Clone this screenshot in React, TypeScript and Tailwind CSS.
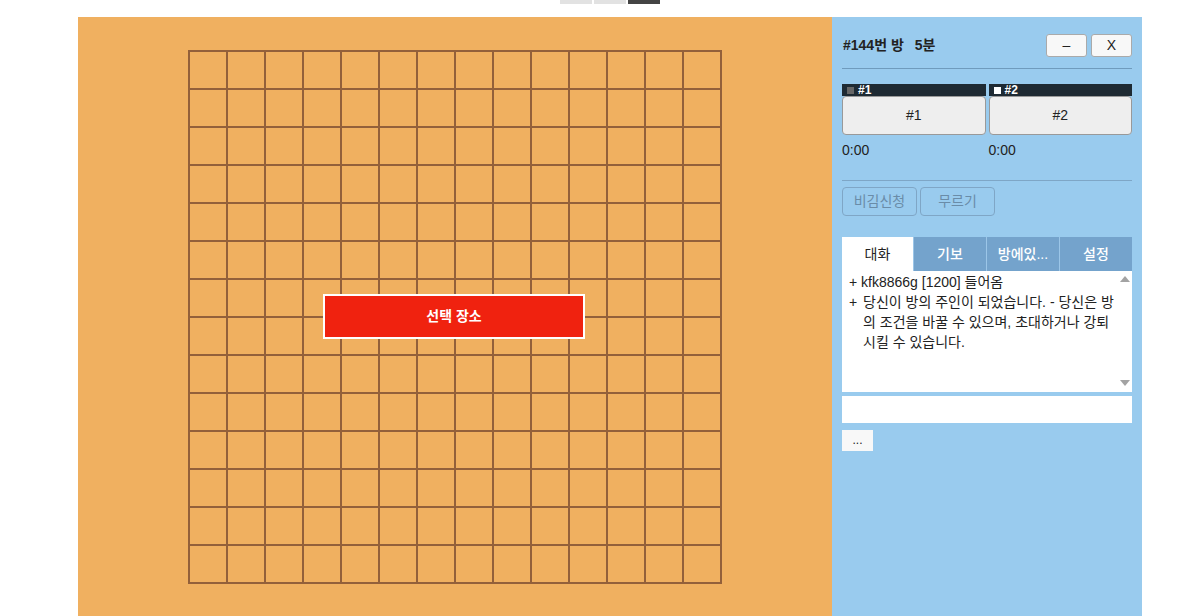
import React from 'react'

const font = { fontFamily: '"Liberation Sans", "Noto Sans CJK KR", sans-serif' }

function Board() {
  const step = 38
  const lines = Array.from({ length: 15 }, (_, i) => i * step + 1)
  return (
    <div className="relative w-[754px] h-[599px] bg-[#f0b060] flex justify-center pt-[33px]">
      <svg width="534" height="534" viewBox="0 0 534 534" className="block">
        {lines.map((p) => (
          <g key={p}>
            <line x1={p} y1={0} x2={p} y2={534} stroke="#93603a" strokeWidth={2} />
            <line x1={0} y1={p} x2={534} y2={p} stroke="#93603a" strokeWidth={2} />
          </g>
        ))}
      </svg>
      <div className="absolute left-[245px] top-[277px] w-[262px] h-[45px] border-2 border-white bg-[#f0220f] flex items-center justify-center">
        <span className="text-white text-[14px] font-bold">선택 장소</span>
      </div>
    </div>
  )
}

function PlayerBox({ name, white }: { name: string; white?: boolean }) {
  return (
    <div className="flex flex-col flex-1">
      <div className="h-[12px] bg-[#1e2a33] flex items-center pl-[5px] gap-[4px]">
        <span className={`w-[7px] h-[7px] ${white ? 'bg-white' : 'bg-[#666]'}`} />
        <span className="text-white text-[12px] font-bold leading-none">{name}</span>
      </div>
      <button className="h-[39px] bg-[#eeeeee] border border-[#999] rounded-[4px] text-[14px] text-[#222]">
        {name}
      </button>
      <div className="mt-[5px] text-[14px] text-[#222]">0:00</div>
    </div>
  )
}

function Panel() {
  const tabs = ['대화', '기보', '방에있...', '설정']
  return (
    <div className="w-[310px] h-[599px] bg-[#99cbee] px-[10px]">
      <div className="flex items-center justify-between pt-[17px] pb-[11px]">
        <div className="text-[14px] font-bold text-[#222] pl-[1px]">
          #144번 방<span className="ml-[11px]">5분</span>
        </div>
        <div className="flex gap-[4px]">
          <button className="w-[41px] h-[23px] bg-[#f8f8f8] border border-[#aaa] rounded-[3px] text-[14px] text-[#222]">–</button>
          <button className="w-[41px] h-[23px] bg-[#f8f8f8] border border-[#aaa] rounded-[3px] text-[14px] text-[#222]">X</button>
        </div>
      </div>
      <div className="h-px bg-[#6f9bbd]" />
      <div className="flex gap-[3px] mt-[15px]">
        <PlayerBox name="#1" />
        <PlayerBox name="#2" white />
      </div>
      <div className="h-px bg-[#7ea6c6] mt-[19px]" />
      <div className="flex gap-[3px] mt-[6px]">
        <button className="w-[75px] h-[29px] border border-[#7fa6c6] rounded-[4px] text-[14px] text-[#6a8ca8]">비김신청</button>
        <button className="w-[75px] h-[29px] border border-[#7fa6c6] rounded-[4px] text-[14px] text-[#6a8ca8]">무르기</button>
      </div>
      <div className="flex mt-[21px] h-[34px]">
        {tabs.map((t, i) => (
          <div
            key={t}
            className={`flex items-center justify-center text-[14px] ${
              i === 0 ? 'w-[71px] bg-white text-[#222]' : 'flex-1 bg-[#74a3cc] text-white font-medium border-l border-[#9cc6e8]'
            }`}
          >
            {t}
          </div>
        ))}
      </div>
      <div className="relative h-[121px] bg-white pl-[7px] pt-[1px] text-[14px] leading-[20px] text-[#222]">
        <div>+ kfk8866g [1200] 들어옴</div>
        <div className="flex">
          <span className="w-[14px] shrink-0">+</span>
          <span>
            당신이 방의 주인이 되었습니다. - 당신은 방<br />의 조건을 바꿀 수 있으며, 초대하거나 강퇴<br />시킬 수 있습니다.
          </span>
        </div>
        <span className="absolute right-[2px] top-[5px] w-0 h-0 border-l-[5px] border-r-[5px] border-b-[6px] border-l-transparent border-r-transparent border-b-[#a3a3a3]" />
        <span className="absolute right-[2px] bottom-[6px] w-0 h-0 border-l-[5px] border-r-[5px] border-t-[6px] border-l-transparent border-r-transparent border-t-[#a3a3a3]" />
      </div>
      <div className="h-[27px] bg-white mt-[4px]" />
      <button className="mt-[7px] w-[31px] h-[21px] bg-[#f8f8f8] text-[12px] text-[#222] leading-none flex items-end justify-center pb-[5px]">...</button>
    </div>
  )
}

export default function App() {
  return (
    <div className="w-[1177px] h-[616px] bg-white overflow-hidden" style={font}>
      <div className="h-[17px] flex justify-center gap-[2px] pl-[43px]">
        <div className="w-[32px] h-[4px] bg-[#e2e2e2]" />
        <div className="w-[32px] h-[4px] bg-[#e2e2e2]" />
        <div className="w-[32px] h-[4px] bg-[#444]" />
      </div>
      <div className="flex ml-[78px]">
        <Board />
        <Panel />
      </div>
    </div>
  )
}
